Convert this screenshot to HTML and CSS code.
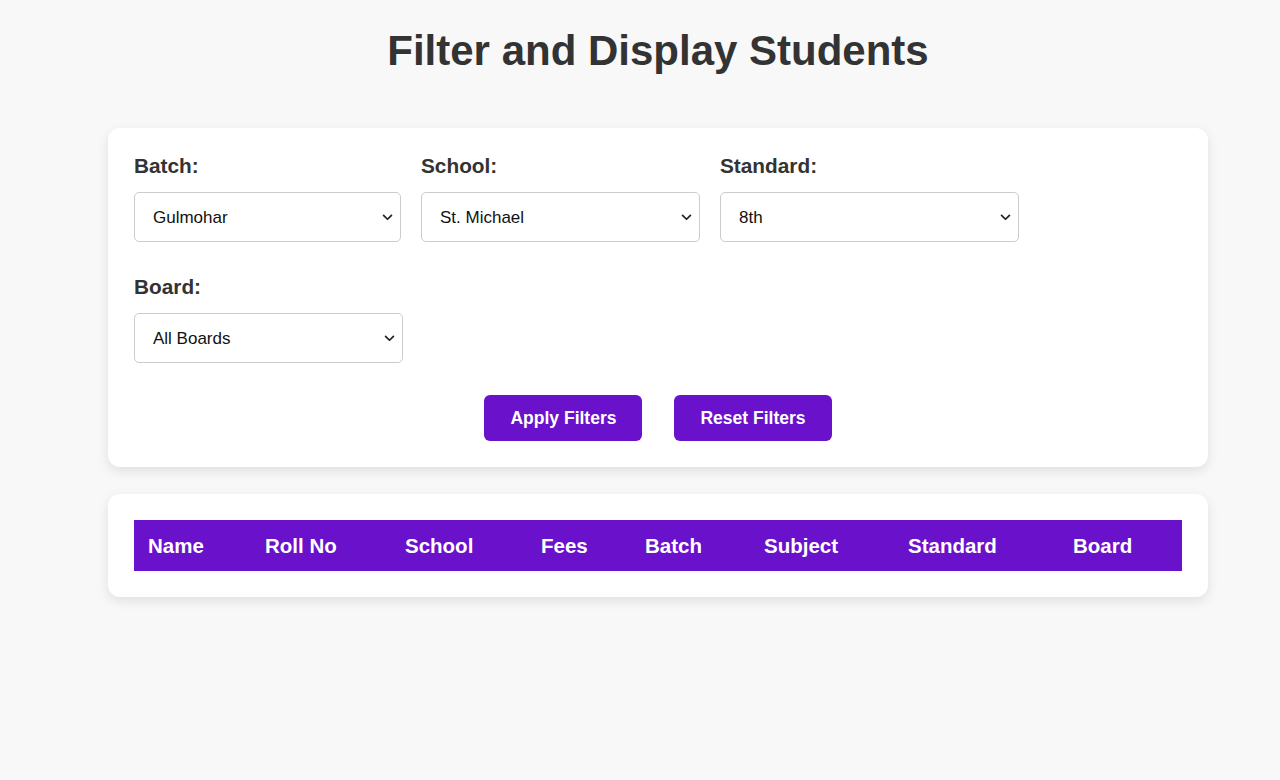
FILE: index.html
```html
<!DOCTYPE html>
<html lang="en">
<head>
<meta charset="utf-8">
<title>Filter and Display Students</title>
<link rel="stylesheet" href="styles.css">
</head>
<body>
<div class="container">
  <h1 class="title">Filter and Display Students</h1>

  <section class="card filters">
    <div class="filter-grid">
      <div class="field field-batch">
        <label class="label" for="batch">Batch:</label>
        <div class="select-wrap">
          <select id="batch" class="select">
            <option>Gulmohar</option>
          </select>
          <svg class="chev" viewBox="0 0 12 8" width="11" height="7"><path d="M1.5 1.5 L6 6 L10.5 1.5" fill="none" stroke="#222" stroke-width="2" stroke-linecap="round" stroke-linejoin="round"/></svg>
        </div>
      </div>
      <div class="field field-school">
        <label class="label" for="school">School:</label>
        <div class="select-wrap">
          <select id="school" class="select">
            <option>St. Michael</option>
          </select>
          <svg class="chev" viewBox="0 0 12 8" width="11" height="7"><path d="M1.5 1.5 L6 6 L10.5 1.5" fill="none" stroke="#222" stroke-width="2" stroke-linecap="round" stroke-linejoin="round"/></svg>
        </div>
      </div>
      <div class="field field-standard">
        <label class="label" for="standard">Standard:</label>
        <div class="select-wrap">
          <select id="standard" class="select">
            <option>8th</option>
          </select>
          <svg class="chev" viewBox="0 0 12 8" width="11" height="7"><path d="M1.5 1.5 L6 6 L10.5 1.5" fill="none" stroke="#222" stroke-width="2" stroke-linecap="round" stroke-linejoin="round"/></svg>
        </div>
      </div>
      <div class="field field-board">
        <label class="label" for="board">Board:</label>
        <div class="select-wrap">
          <select id="board" class="select">
            <option>All Boards</option>
          </select>
          <svg class="chev" viewBox="0 0 12 8" width="11" height="7"><path d="M1.5 1.5 L6 6 L10.5 1.5" fill="none" stroke="#222" stroke-width="2" stroke-linecap="round" stroke-linejoin="round"/></svg>
        </div>
      </div>
    </div>
    <div class="actions">
      <button class="btn" type="button">Apply Filters</button>
      <button class="btn" type="button">Reset Filters</button>
    </div>
  </section>

  <section class="card results">
    <table class="table">
      <thead>
        <tr>
          <th>Name</th>
          <th>Roll No</th>
          <th>School</th>
          <th>Fees</th>
          <th>Batch</th>
          <th>Subject</th>
          <th>Standard</th>
          <th>Board</th>
        </tr>
      </thead>
      <tbody></tbody>
    </table>
  </section>
</div>
</body>
</html>
```

FILE: styles.css
```css
* { box-sizing: border-box; }

html, body {
  margin: 0;
  background: #f8f8f8;
}

body {
  padding: 0 0 40px 36px;
  font-family: "Liberation Sans", Arial, sans-serif;
  color: #333;
}

.container {
  width: 1100px;
  margin: 0 auto;
}

.title {
  margin: 27px 0 53px;
  text-align: center;
  font-size: 42px;
  line-height: 48px;
  font-weight: bold;
  color: #333;
}

.card {
  background: #fff;
  border-radius: 12px;
  box-shadow: 0 4px 12px rgba(0, 0, 0, 0.1);
  padding: 26px;
}

.filters {
  margin-bottom: 27px;
}

.filter-grid {
  display: flex;
  flex-wrap: wrap;
  column-gap: 20px;
  row-gap: 33px;
}

.field-batch { width: 267px; }
.field-school { width: 279px; }
.field-standard { width: 299px; }
.field-board { width: 269px; }

.label {
  display: block;
  font-size: 20.8px;
  line-height: 24px;
  font-weight: bold;
  color: #333;
  margin-bottom: 14px;
}

.select-wrap {
  position: relative;
}

.select {
  -webkit-appearance: none;
  appearance: none;
  display: block;
  width: 100%;
  height: 50px;
  padding: 0 30px 0 18px;
  border: 1px solid #cccccc;
  border-radius: 5px;
  background: #fff;
  font-family: "Liberation Sans", Arial, sans-serif;
  font-size: 17px;
  color: #111;
}

.chev {
  position: absolute;
  right: 8px;
  top: 22px;
  pointer-events: none;
}

.actions {
  display: flex;
  justify-content: center;
  gap: 32px;
  margin-top: 32px;
}

.btn {
  height: 46px;
  padding: 0 26px;
  border: none;
  border-radius: 6px;
  background: #6a11cb;
  color: #fff;
  font-family: "Liberation Sans", Arial, sans-serif;
  font-size: 17.5px;
  font-weight: bold;
}

.table {
  width: 100%;
  border-collapse: collapse;
  table-layout: fixed;
}

.table th {
  background: #6a11cb;
  color: #fff;
  text-align: left;
  font-size: 20.5px;
  font-weight: bold;
  height: 51px;
  padding: 0 0 0 14px;
}

.table th:nth-child(1) { width: 117px; }
.table th:nth-child(2) { width: 140px; }
.table th:nth-child(3) { width: 136px; }
.table th:nth-child(4) { width: 104px; }
.table th:nth-child(5) { width: 119px; }
.table th:nth-child(6) { width: 144px; }
.table th:nth-child(7) { width: 165px; }
.table th:nth-child(8) { width: 123px; }
```
